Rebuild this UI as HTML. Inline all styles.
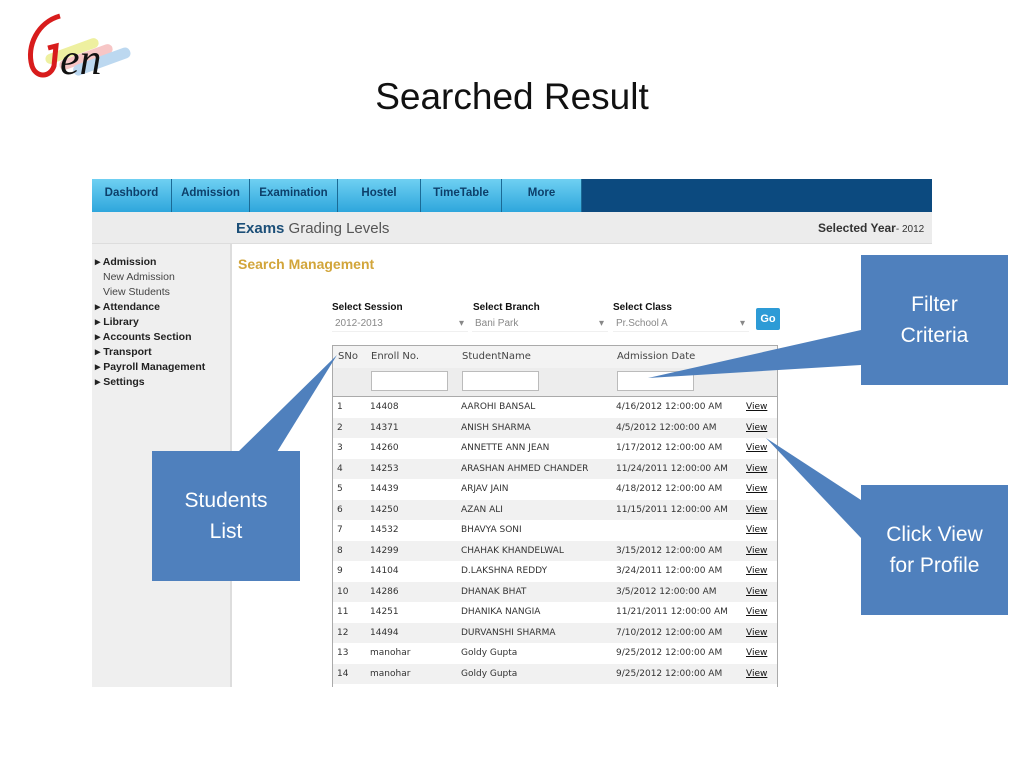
<!DOCTYPE html>
<html><head><meta charset="utf-8"><style>
*{margin:0;padding:0;box-sizing:border-box}
body{width:1024px;height:768px;background:#fff;position:relative;overflow:hidden;font-family:"Liberation Sans",sans-serif}
.abs{position:absolute}
.title{left:0;width:1024px;top:76px;text-align:center;font-size:37px;color:#111;font-family:"Liberation Sans",sans-serif}
.nav{left:92px;top:179px;width:840px;height:33px;background:#0c4a7f}
.tab{position:absolute;top:0;height:33px;background:linear-gradient(#6fd0f2,#2ea6dc);border-right:1px solid #1b6a95;font-size:11.5px;font-weight:bold;color:#0d3f6a;text-align:center;line-height:28px}
.band{left:92px;top:212px;width:840px;height:32px;background:#ececec;border-bottom:1px solid #ddd}
.side{left:92px;top:244px;width:140px;height:443px;background:#efefef;border-right:2px solid #ddd}
.side div{font-size:10.5px;line-height:15px;color:#222}
.side b{font-weight:bold}
.lbl{font-size:10px;font-weight:bold;color:#111}
.sel{font-size:10px;color:#888;height:17px;line-height:17px;padding-left:3px;border-bottom:1px solid #f0f0f0}
table{border-collapse:collapse;font-size:10px;color:#333;font-family:"DejaVu Sans",sans-serif}
td{height:20.5px;padding:0 0 0 4px;white-space:nowrap;font-size:9px}
tr:nth-child(even) td{background:#f1f1f1}
td u{color:#111}
.box{background:#4f80bd;color:#fff;font-size:21px;text-align:center;line-height:31px;font-family:"Liberation Sans",sans-serif}
</style></head><body>
<svg class="abs" style="left:16px;top:12px" width="124" height="76" viewBox="0 0 124 76">
<rect x="28" y="34" width="56" height="10" rx="5" fill="#eef0a0" transform="rotate(-20 56 39)"/>
<rect x="42" y="40" width="56" height="10" rx="5" fill="#f7c6c6" transform="rotate(-20 70 45)"/>
<rect x="56" y="44" width="60" height="11" rx="5" fill="#bcd8f0" transform="rotate(-20 86 50)"/>
<path d="M44 4 C22 10 10 34 16 54 C20 66 34 66 38 54 L40 34 L32 36" fill="none" stroke="#d81c1c" stroke-width="5"/>
<text x="44" y="62" font-family="Liberation Serif" font-style="italic" font-size="44" fill="#111">en</text>
</svg>
<div class="abs title">Searched Result</div>
<div class="abs nav">
<div class="tab" style="left:0;width:80px">Dashbord</div>
<div class="tab" style="left:80px;width:78px">Admission</div>
<div class="tab" style="left:158px;width:88px">Examination</div>
<div class="tab" style="left:246px;width:83px">Hostel</div>
<div class="tab" style="left:329px;width:81px">TimeTable</div>
<div class="tab" style="left:410px;width:80px">More</div>
</div>
<div class="abs band"></div>
<div class="abs" style="left:236px;top:220px;font-size:15px;color:#555"><span style="color:#1c4f78;font-weight:bold">Exams</span> Grading Levels</div>
<div class="abs" style="left:818px;top:221px;font-size:12px;font-weight:bold;color:#333">Selected Year<span style="font-weight:normal;font-size:10px">- 2012</span></div>
<div class="abs side">
<div style="padding:11px 0 0 3px">
<div><b>▸ Admission</b></div>
<div style="padding-left:8px;color:#444">New Admission</div>
<div style="padding-left:8px;color:#444">View Students</div>
<div><b>▸ Attendance</b></div>
<div><b>▸ Library</b></div>
<div><b>▸ Accounts Section</b></div>
<div><b>▸ Transport</b></div>
<div><b>▸ Payroll Management</b></div>
<div><b>▸ Settings</b></div>
</div></div>
<div class="abs" style="left:238px;top:256px;font-size:14px;font-weight:bold;color:#d2a53a">Search Management</div>
<div class="abs lbl" style="left:332px;top:302px">Select Session</div>
<div class="abs lbl" style="left:473px;top:302px">Select Branch</div>
<div class="abs lbl" style="left:613px;top:302px">Select Class</div>
<div class="abs sel" style="left:332px;top:315px;width:136px">2012-2013<span style="float:right;padding-right:4px">▾</span></div>
<div class="abs sel" style="left:472px;top:315px;width:136px">Bani Park<span style="float:right;padding-right:4px">▾</span></div>
<div class="abs sel" style="left:613px;top:315px;width:136px">Pr.School A<span style="float:right;padding-right:4px">▾</span></div>
<div class="abs" style="left:756px;top:308px;width:24px;height:22px;background:#2d9bd6;border-radius:2px;color:#fff;font-weight:bold;font-size:11px;text-align:center;line-height:22px">Go</div>
<div class="abs" style="left:332px;top:345px;width:446px;height:342px;border:1px solid #aaa;border-bottom:none;background:#fff">
<div style="height:22px;background:#f3f3f3;font-size:10px;color:#444;position:relative;font-family:'DejaVu Sans',sans-serif">
<span class="abs" style="left:5px;top:5px">SNo</span><span class="abs" style="left:38px;top:5px">Enroll No.</span><span class="abs" style="left:129px;top:5px">StudentName</span><span class="abs" style="left:284px;top:5px">Admission Date</span></div>
<div style="height:29px;background:#ededed;border-bottom:1px solid #aaa;position:relative">
<div class="abs" style="left:38px;top:3px;width:77px;height:20px;background:#fff;border:1px solid #bbb"></div>
<div class="abs" style="left:129px;top:3px;width:77px;height:20px;background:#fff;border:1px solid #bbb"></div>
<div class="abs" style="left:284px;top:3px;width:77px;height:20px;background:#fff;border:1px solid #bbb"></div>
</div>
<table style="width:444px">
<colgroup><col style="width:33px"><col style="width:91px"><col style="width:155px"><col style="width:130px"><col></colgroup>
<tr><td>1</td><td>14408</td><td>AAROHI BANSAL</td><td>4/16/2012 12:00:00 AM</td><td><u>View</u></td></tr>
<tr><td>2</td><td>14371</td><td>ANISH SHARMA</td><td>4/5/2012 12:00:00 AM</td><td><u>View</u></td></tr>
<tr><td>3</td><td>14260</td><td>ANNETTE ANN JEAN</td><td>1/17/2012 12:00:00 AM</td><td><u>View</u></td></tr>
<tr><td>4</td><td>14253</td><td>ARASHAN AHMED CHANDER</td><td>11/24/2011 12:00:00 AM</td><td><u>View</u></td></tr>
<tr><td>5</td><td>14439</td><td>ARJAV JAIN</td><td>4/18/2012 12:00:00 AM</td><td><u>View</u></td></tr>
<tr><td>6</td><td>14250</td><td>AZAN ALI</td><td>11/15/2011 12:00:00 AM</td><td><u>View</u></td></tr>
<tr><td>7</td><td>14532</td><td>BHAVYA SONI</td><td></td><td><u>View</u></td></tr>
<tr><td>8</td><td>14299</td><td>CHAHAK KHANDELWAL</td><td>3/15/2012 12:00:00 AM</td><td><u>View</u></td></tr>
<tr><td>9</td><td>14104</td><td>D.LAKSHNA REDDY</td><td>3/24/2011 12:00:00 AM</td><td><u>View</u></td></tr>
<tr><td>10</td><td>14286</td><td>DHANAK BHAT</td><td>3/5/2012 12:00:00 AM</td><td><u>View</u></td></tr>
<tr><td>11</td><td>14251</td><td>DHANIKA NANGIA</td><td>11/21/2011 12:00:00 AM</td><td><u>View</u></td></tr>
<tr><td>12</td><td>14494</td><td>DURVANSHI SHARMA</td><td>7/10/2012 12:00:00 AM</td><td><u>View</u></td></tr>
<tr><td>13</td><td>manohar</td><td>Goldy Gupta</td><td>9/25/2012 12:00:00 AM</td><td><u>View</u></td></tr>
<tr><td>14</td><td>manohar</td><td>Goldy Gupta</td><td>9/25/2012 12:00:00 AM</td><td><u>View</u></td></tr>
</table></div>
<svg class="abs" style="left:0;top:0" width="1024" height="768">
<polygon points="861,330 861,365 648,378" fill="#4f80bd"/>
<polygon points="238,452 277,452 337,355" fill="#4f80bd"/>
<polygon points="861,500 861,538 766,438" fill="#4f80bd"/>
</svg>
<div class="abs box" style="left:861px;top:255px;width:147px;height:130px;padding-top:34px">Filter<br>Criteria</div>
<div class="abs box" style="left:152px;top:451px;width:148px;height:130px;padding-top:34px">Students<br>List</div>
<div class="abs box" style="left:861px;top:485px;width:147px;height:130px;padding-top:34px">Click View<br>for Profile</div>
</body></html>
